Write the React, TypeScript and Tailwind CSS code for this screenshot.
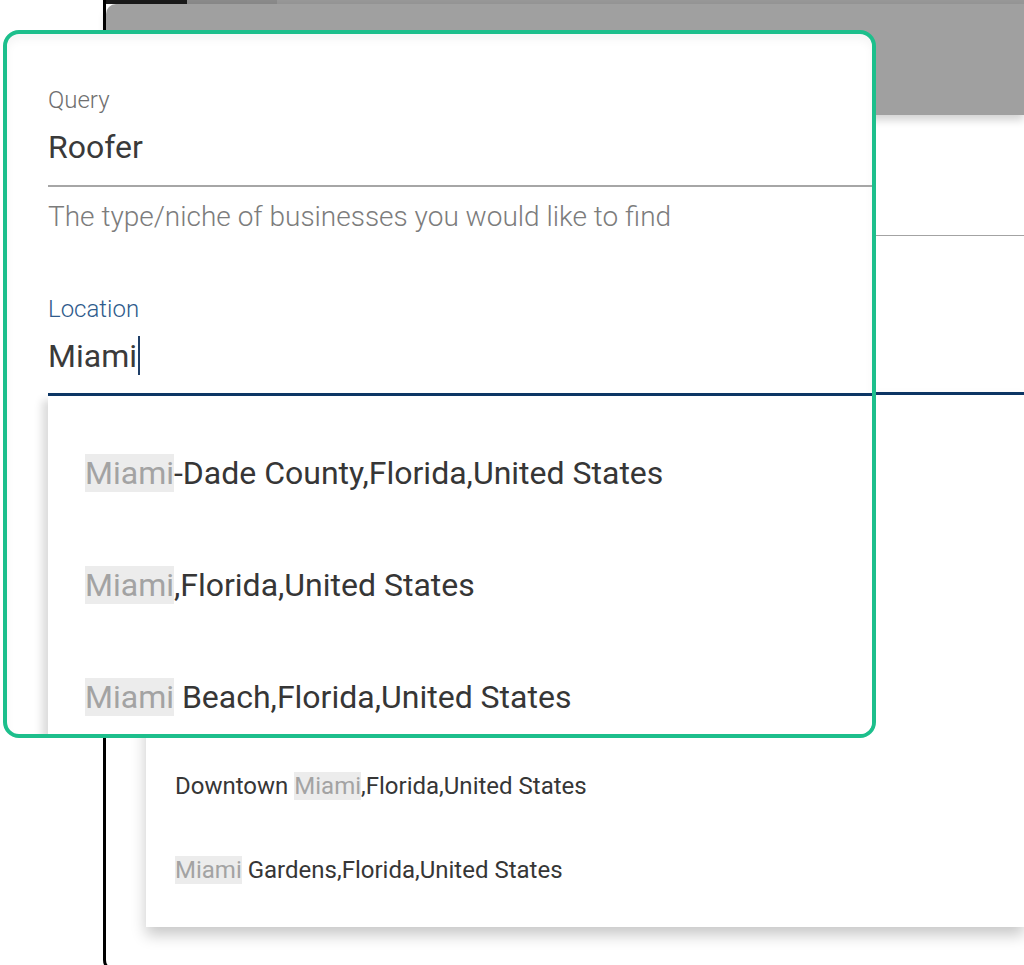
const suggestions = [
  { pre: '', hit: 'Miami', post: '-Dade County,Florida,United States' },
  { pre: '', hit: 'Miami', post: ',Florida,United States' },
  { pre: '', hit: 'Miami', post: ' Beach,Florida,United States' },
  { pre: 'Downtown ', hit: 'Miami', post: ',Florida,United States' },
  { pre: '', hit: 'Miami', post: ' Gardens,Florida,United States' },
];

function Suggestion({ item, big }: { item: (typeof suggestions)[number]; big?: boolean }) {
  return (
    <div
      className={
        big
          ? 'h-[112px] flex items-center pl-[37px] text-[32px] leading-[38px] text-[#363636]'
          : 'h-[84px] flex items-center pl-[29px] text-[24px] leading-[28px] text-[#363636]'
      }
    >
      <span className="whitespace-pre">
        {item.pre}
        <span className="bg-[#ececec] text-[#a3a3a3]">{item.hit}</span>
        {item.post}
      </span>
    </div>
  );
}

export default function App() {
  return (
    <div className="relative w-[1024px] h-[965px] overflow-hidden bg-white font-['Roboto',sans-serif]">
      {/* background: the app window, shown at normal size */}
      <div className="ml-[103px] h-[972px] border-l-[3px] border-b-[3px] border-black rounded-bl-[12px] flex flex-col">
        <div className="h-[4px] flex">
          <div className="w-[81px] bg-[#1a1a1a]" />
          <div className="w-[90px] bg-[#8a8a8a]" />
          <div className="flex-1 bg-[#979797]" />
        </div>
        <div className="h-[111px] bg-[#a0a0a0] rounded-tl-[10px] shadow-[0_5px_8px_rgba(0,0,0,0.18)] relative z-10" />
        <div className="ml-[40px] mt-[120px] h-px bg-[#a3a3a3]" />
        <div className="ml-[40px] mt-[156px] h-[3px] bg-[#0d3766]" />
        {/* only the last two rows show past the callout */}
        <div className="ml-[40px] pt-[349px] pb-[15px] bg-white shadow-[0_8px_14px_rgba(0,0,0,0.22)]">
          {suggestions.slice(3).map((s, i) => (
            <Suggestion key={i} item={s} />
          ))}
        </div>
      </div>

      {/* zoomed callout */}
      <div className="absolute z-20 left-[3px] top-[30px] w-[873px] h-[708px] border-4 border-[#1dbf8c] rounded-[16px] bg-white overflow-hidden shadow-[inset_0_6px_8px_rgba(0,0,0,0.04)]">
        <div className="pl-[41px] pt-[52px] flex flex-col">
          <div className="text-[24px] leading-[28px] font-light text-[#6f6f6f]">Query</div>
          <div className="mt-[14px] text-[32px] leading-[38px] text-[#3a3a3a]">Roofer</div>
          <div className="mt-[19px] h-[2px] bg-[#a6a6a6]" />
          <div className="mt-[14px] text-[28px] leading-[32px] font-light text-[#7c7c7c]">
            The type/niche of businesses you would like to find
          </div>
          <div className="mt-[62px] text-[24px] leading-[28px] font-light text-[#2f5b8c]">Location</div>
          <div className="mt-[13px] text-[32px] leading-[38px] text-[#3a3a3a] flex items-center">
            Miami
            <span className="inline-block w-[2px] h-[39px] bg-[#1f3f68] ml-px" />
          </div>
          <div className="mt-[18px] h-[3px] bg-[#0d3766]" />
          <div className="pt-[21px] h-[400px] bg-white shadow-[-6px_4px_8px_rgba(0,0,0,0.14)]">
            {suggestions.slice(0, 3).map((s, i) => (
              <Suggestion key={i} item={s} big />
            ))}
          </div>
        </div>
      </div>
    </div>
  );
}
